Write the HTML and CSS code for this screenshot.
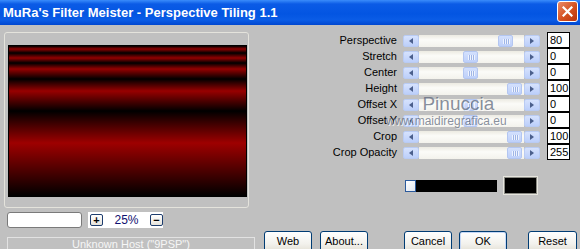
FILE: index.html
```html
<!DOCTYPE html>
<html>
<head>
    <title>Perspective Tiling</title>
    <link rel="stylesheet" href="styles.css">
</head>
<body>
    <div class="window">
        <div class="titlebar">
            <span class="title">MuRa's Filter Meister - Perspective Tiling 1.1</span>
            <span class="close">
                <svg width="11" height="11" viewBox="0 0 11 11">
                    <path d="M1.5 1.5 L9.5 9.5 M9.5 1.5 L1.5 9.5" stroke="#fff" stroke-width="2.2" stroke-linecap="square"/>
                </svg>
            </span>
        </div>
        <div class="client">
            <div class="left">
                <div class="preview">
                    <div class="preview-image"></div>
                </div>
                <div class="zoom-row">
                    <div class="zoom-input"></div>
                    <div class="zoom-ctrl">
                        <span class="mini-btn">+</span>
                        <span class="zoom-value">25%</span>
                        <span class="mini-btn">&minus;</span>
                    </div>
                </div>
                <div class="status">Unknown Host ("9PSP")</div>
            </div>
            <div class="right">
                <div class="params">
                    <label>Perspective</label>
                    <div class="slider"><span class="arrow arrow-left"></span><span class="track"><span class="thumb" style="left: 79px"></span></span><span class="arrow arrow-right"></span></div>
                    <div class="value">80</div>

                    <label>Stretch</label>
                    <div class="slider"><span class="arrow arrow-left"></span><span class="track"><span class="thumb" style="left: 44px"></span></span><span class="arrow arrow-right"></span></div>
                    <div class="value">0</div>

                    <label>Center</label>
                    <div class="slider"><span class="arrow arrow-left"></span><span class="track"><span class="thumb" style="left: 44px"></span></span><span class="arrow arrow-right"></span></div>
                    <div class="value">0</div>

                    <label>Height</label>
                    <div class="slider"><span class="arrow arrow-left"></span><span class="track"><span class="thumb" style="left: 88px"></span></span><span class="arrow arrow-right"></span></div>
                    <div class="value">100</div>

                    <label>Offset X</label>
                    <div class="slider"><span class="arrow arrow-left"></span><span class="track"><span class="thumb" style="left: 44px"></span></span><span class="arrow arrow-right"></span></div>
                    <div class="value">0</div>

                    <label>Offset Y</label>
                    <div class="slider"><span class="arrow arrow-left"></span><span class="track"><span class="thumb" style="left: 44px"></span></span><span class="arrow arrow-right"></span></div>
                    <div class="value">0</div>

                    <label>Crop</label>
                    <div class="slider"><span class="arrow arrow-left"></span><span class="track"><span class="thumb" style="left: 88px"></span></span><span class="arrow arrow-right"></span></div>
                    <div class="value">100</div>

                    <label>Crop Opacity</label>
                    <div class="slider"><span class="arrow arrow-left"></span><span class="track"><span class="thumb" style="left: 88px"></span></span><span class="arrow arrow-right"></span></div>
                    <div class="value">255</div>

                    <div class="watermark">
                        <span class="wm-name">Pinuccia</span>
                        <span class="wm-site">www.maidiregrafica.eu</span>
                    </div>
                </div>
                <div class="color-row">
                    <div class="color-bar"><span class="color-knob"></span></div>
                    <div class="color-swatch"></div>
                </div>
                <div class="buttons">
                    <button class="btn-web">Web</button>
                    <button class="btn-about">About...</button>
                    <button class="btn-cancel">Cancel</button>
                    <button class="btn-ok">OK</button>
                    <button class="btn-reset">Reset</button>
                </div>
            </div>
        </div>
    </div>
</body>
</html>
```

FILE: styles.css
```css
body {
    margin: 0;
    background-color: #c0c0c0;
    font-family: "Liberation Sans", Arial, sans-serif;
    font-size: 11px;
    color: #000;
}
.window {
    width: 580px;
    height: 249px;
    overflow: hidden;
}
.titlebar {
    height: 25px;
    display: flex;
    align-items: center;
    justify-content: space-between;
    padding: 0 2px 0 3px;
    background: linear-gradient(#3a8cfb 0, #0b5be6 4px, #0355e2 14px, #0a5ce6 20px, #0046cf 25px);
}
.title {
    color: white;
    font-weight: bold;
    font-size: 13px;
    margin-top: -1px;
}
.close {
    width: 19px;
    height: 19px;
    border: 1px solid #fff;
    border-radius: 3px;
    display: flex;
    align-items: center;
    justify-content: center;
    background: linear-gradient(135deg, #ea8a68, #d4501f 55%, #b8330d);
    margin-top: -2px;
}
.client {
    display: flex;
    height: 224px;
}
.left {
    width: 256px;
}
.preview {
    margin: 7px 0 0 4px;
    width: 245px;
    height: 176px;
    box-sizing: border-box;
    border: 1px solid #e4e3dc;
    border-radius: 3px;
    padding: 12px 0 0 3px;
}
.preview-image {
    width: 239px;
    height: 152px;
    box-sizing: border-box;
    border: 1px solid #000;
    background: linear-gradient(#000 0px, #8e0000 3px, #000 7px, #920000 12px, #000 17px, #950000 23px, #000 33px, #980000 45px, #000 65px, #9e0000 97px, #000 150px);
}
.zoom-row {
    display: flex;
    margin: 4px 0 0 7px;
}
.zoom-input {
    width: 75px;
    height: 16px;
    box-sizing: border-box;
    border: 1px solid #7a7a7a;
    border-radius: 3px;
    background: #fff;
}
.zoom-ctrl {
    margin-left: 6px;
    width: 75px;
    height: 16px;
    background: #fff;
    display: flex;
    align-items: center;
    justify-content: space-between;
    padding: 0 0 0 2px;
    box-sizing: border-box;
}
.mini-btn {
    width: 13px;
    height: 12px;
    box-sizing: border-box;
    border: 1px solid #1d3c6e;
    border-radius: 2px;
    background: linear-gradient(#fff, #e6e4dc);
    font-weight: bold;
    font-size: 11px;
    line-height: 10px;
    text-align: center;
}
.zoom-value {
    color: #101070;
    font-size: 12px;
}
.status {
    margin: 9px 0 0 7px;
    width: 248px;
    height: 22px;
    box-sizing: border-box;
    border: 1px solid #e2e2e2;
    color: #f6f6f6;
    text-align: center;
    line-height: 11px;
    padding-top: 1px;
    font-size: 11px;
}
.right {
    flex: 1;
}
.params {
    position: relative;
    margin-top: 7px;
    display: grid;
    grid-template-columns: 141px 137px 24px;
    grid-auto-rows: 16px;
    column-gap: 6px;
}
.params label {
    text-align: right;
    line-height: 16px;
}
.slider {
    display: flex;
    height: 12px;
    margin-top: 3px;
}
.arrow {
    width: 16px;
    height: 12px;
    box-sizing: border-box;
    border: 1px solid #b9cbf3;
    border-radius: 2px;
    background: linear-gradient(#d6e2fd, #bccffa);
    display: flex;
    align-items: center;
    justify-content: center;
}
.arrow::after {
    content: "";
    border-top: 3.5px solid transparent;
    border-bottom: 3.5px solid transparent;
}
.arrow-left::after {
    border-right: 4px solid #4b5f8c;
}
.arrow-right::after {
    border-left: 4px solid #4b5f8c;
}
.track {
    flex: 1;
    position: relative;
    background: linear-gradient(#eceae2, #fbfbf8 40%, #f3f2ec);
}
.thumb {
    position: absolute;
    top: 0;
    width: 15px;
    height: 12px;
    box-sizing: border-box;
    border: 1px solid #b3c6f1;
    border-radius: 2px;
    background:
        repeating-linear-gradient(90deg, #eef3fe 0 1px, #9fb5e6 1px 2px) 4px 3px / 7px 5px no-repeat,
        linear-gradient(#d3e0fd, #bed0fa);
}
.value {
    margin-left: 1px;
    height: 16px;
    box-sizing: border-box;
    border: 1px solid #000;
    background: #fff;
    padding-left: 2px;
    line-height: 14px;
}
.watermark {
    position: absolute;
    left: 130px;
    top: 62px;
    display: flex;
    flex-direction: column;
    align-items: center;
    pointer-events: none;
}
.wm-name {
    font-size: 19px;
    line-height: 20px;
    color: rgba(85, 95, 115, 0.7);
    text-shadow: 1px 1px 0 rgba(255, 255, 255, 0.7);
    margin-left: 24px;
}
.wm-site {
    font-size: 12px;
    line-height: 14px;
    color: rgba(85, 95, 115, 0.7);
    text-shadow: 1px 1px 0 rgba(255, 255, 255, 0.7);
}
.color-row {
    display: flex;
    align-items: center;
    margin: 16px 0 0 149px;
    height: 19px;
}
.color-bar {
    width: 92px;
    height: 12px;
    background: #000;
}
.color-knob {
    display: block;
    width: 11px;
    height: 12px;
    box-sizing: border-box;
    border: 1px solid #2b5a9c;
    background: linear-gradient(135deg, #fff, #dfe6f0);
}
.color-swatch {
    margin-left: 6px;
    width: 35px;
    height: 19px;
    box-sizing: border-box;
    border: 1px solid #e6e5de;
    outline: 1px solid #8a8a84;
    outline-offset: -2px;
    background: #000;
}
.buttons {
    display: flex;
    margin: 36px 0 0 8px;
}
button {
    font-family: "Liberation Sans", Arial, sans-serif;
    font-size: 11px;
    width: 48px;
    height: 22px;
    padding: 0 0 3px;
    border: 1px solid #003c74;
    border-radius: 3px;
    background: linear-gradient(#fff, #f2f1ec 60%, #e2ded3);
    color: #000;
}
.btn-about {
    margin-left: 8px;
}
.btn-cancel {
    margin-left: 36px;
}
.btn-ok {
    margin-left: 7px;
    box-shadow: inset 0 0 0 1px #c6d8f6;
}
.btn-reset {
    margin-left: 21px;
    width: 49px;
}
```
